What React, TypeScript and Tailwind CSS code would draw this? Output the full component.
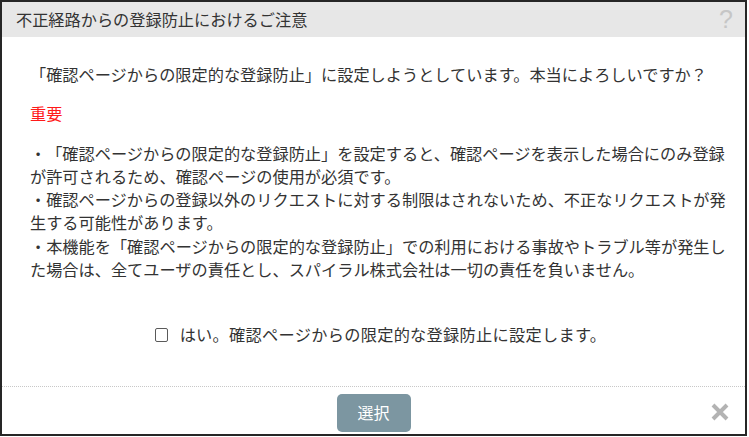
import React, { useState } from "react";

const font = { fontFamily: '"Noto Sans CJK JP", "Noto Sans", sans-serif' };

const App: React.FC = () => {
  const [checked, setChecked] = useState(false);

  return (
    <div className="w-[749px] h-[437px] bg-white" style={font}>
      <div className="w-[747px] h-[436px] border-2 border-[#262626] flex flex-col text-[16.2px] leading-[23.3px] text-[#333] [text-spacing-trim:space-all]">
        {/* header */}
        <div className="h-[35px] bg-[#e7e7e7] flex items-center justify-between pl-[14px] pr-[12px]">
          <span className="text-[#333]">不正経路からの登録防止におけるご注意</span>
          <span
            className="text-[25px] leading-none text-[#c6c6c6]"
            style={{ fontFamily: '"Liberation Sans", sans-serif' }}
          >
            ?
          </span>
        </div>

        {/* body */}
        <div className="flex-1 flex flex-col pt-[26px] pl-[28px]">
          <p className="w-[705px]">
            「確認ページからの限定的な登録防止」に設定しようとしています。本当によろしいですか？
          </p>
          <p className="mt-4 text-[#ff1a1a]">重要</p>
          <div className="mt-4 w-[705px]">
            <p>
              ・「確認ページからの限定的な登録防止」を設定すると、確認ページを表示した場合にのみ登録が許可されるため、確認ページの使用が必須です。
            </p>
            <p>
              ・確認ページからの登録以外のリクエストに対する制限はされないため、不正なリクエストが発生する可能性があります。
            </p>
            <p>
              ・本機能を「確認ページからの限定的な登録防止」での利用における事故やトラブル等が発生した場合は、全てユーザの責任とし、スパイラル株式会社は一切の責任を負いません。
            </p>
          </div>
          <label className="mt-[42px] mr-[14px] flex items-center justify-center gap-[12px] cursor-pointer">
            <input
              type="checkbox"
              checked={checked}
              onChange={(e) => setChecked(e.target.checked)}
              className="appearance-none w-[13px] h-[14px] border border-[#5a5a5a] rounded-[2px] bg-white checked:bg-[#7d96a1]"
            />
            <span className="tracking-[0.3px]">はい。確認ページからの限定的な登録防止に設定します。</span>
          </label>
        </div>

        {/* footer */}
        <div className="h-[48px] border-t border-dotted border-[#c8c8c8] flex items-start justify-center relative">
          <button
            type="button"
            className="mt-[7px] w-[74px] h-[38px] rounded-[5px] bg-[#7c96a1] text-white text-[16px]"
          >
            選択
          </button>
          <svg
            className="absolute right-[15px] top-[15px]"
            width="20"
            height="20"
            viewBox="0 0 20 20"
          >
            <path
              d="M3 3 L17 17 M17 3 L3 17"
              stroke="#b3b3b3"
              strokeWidth="4"
              strokeLinecap="butt"
            />
          </svg>
        </div>
      </div>
    </div>
  );
};

export default App;
